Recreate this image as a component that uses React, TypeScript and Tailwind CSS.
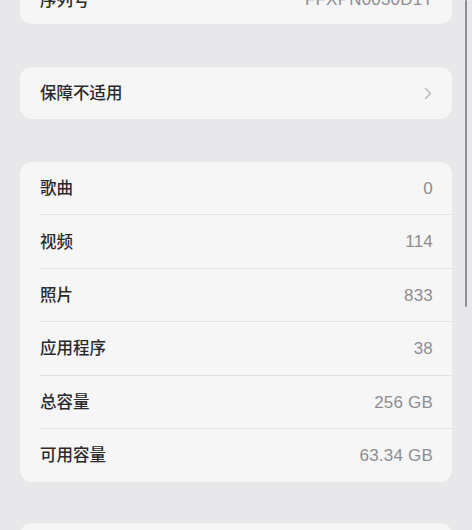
const rows: [string, string][] = [
  ["歌曲", "0"],
  ["视频", "114"],
  ["照片", "833"],
  ["应用程序", "38"],
  ["总容量", "256 GB"],
  ["可用容量", "63.34 GB"],
];

function Row({ label, value, divider }: { label: string; value: string; divider: boolean }) {
  return (
    <div className="relative flex h-[53.4px] items-center justify-between pl-5 pr-[19px]">
      <span className="text-[16.5px] font-medium text-[#2a2a2c]">{label}</span>
      <span className="text-[17px] tracking-[0.2px] text-[#8d8d91]">{value}</span>
      {divider && <div className="absolute bottom-0 left-5 right-0 h-px bg-[#e2e2e5]" />}
    </div>
  );
}

export default function App() {
  return (
    <div
      className="relative h-[530px] w-[472px] overflow-hidden bg-[#e8e8eb]"
      style={{ fontFamily: '"Liberation Sans", "Noto Sans CJK SC", sans-serif' }}
    >
      <div className="flex flex-col gap-[43px] px-5">
        <div className="-mt-[29px] rounded-xl bg-[#f6f6f7]">
          <div className="flex h-[53px] items-center justify-between pl-5 pr-[19px] pt-[5px]">
            <span className="text-[16.5px] font-medium text-[#2a2a2c]">序列号</span>
            <span className="text-[17px] tracking-[0.2px] text-[#8d8d91]">FFXPN0030D1T</span>
          </div>
        </div>

        <div className="rounded-xl bg-[#f6f6f7]">
          <div className="flex h-[52px] items-center justify-between pl-5 pr-[20px] pt-[1px]">
            <span className="text-[16.5px] font-medium text-[#2a2a2c]">保障不适用</span>
            <svg width="8" height="13" viewBox="0 0 8 13" fill="none">
              <path d="M1.5 1.5 6.5 6.5 1.5 11.5" stroke="#b4b4b8" strokeWidth="1.4" strokeLinecap="round" strokeLinejoin="round" />
            </svg>
          </div>
        </div>

        <div className="rounded-xl bg-[#f6f6f7]">
          {rows.map(([l, v], i) => (
            <Row key={l} label={l} value={v} divider={i < rows.length - 1} />
          ))}
        </div>

        <div className="-mt-[2px] h-[60px] rounded-xl bg-[#f6f6f7]" />
      </div>

      <div className="absolute right-[5px] top-0 h-[307px] w-[2px] rounded-full bg-[#8f8f93]" />
    </div>
  );
}
